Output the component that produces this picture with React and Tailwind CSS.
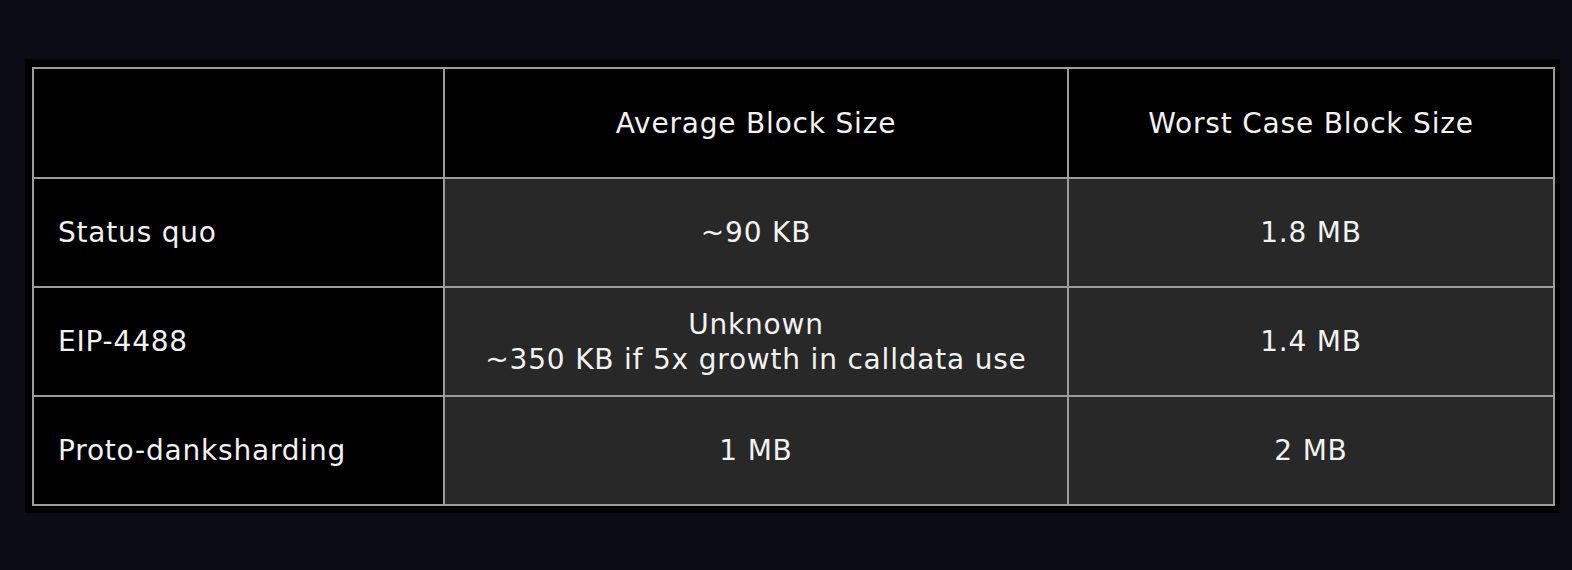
import React from "react";

const rows = [
  { label: "Status quo", avg: ["~90 KB"], worst: "1.8 MB" },
  { label: "EIP-4488", avg: ["Unknown", "~350 KB if 5x growth in calldata use"], worst: "1.4 MB" },
  { label: "Proto-danksharding", avg: ["1 MB"], worst: "2 MB" },
];

export default function App() {
  return (
    <div
      className="w-[1572px] h-[570px] bg-[#0b0c15] pt-[59px] pl-[25px]"
      style={{ fontFamily: '"DejaVu Sans", sans-serif' }}
    >
      <div className="w-[1535px] h-[454px] bg-black pl-[7px] pt-[8px]">
        <table className="border-collapse text-[#f2f2f2] text-[28px] leading-[35px] tracking-[0.8px]">
          <thead>
            <tr className="h-[110px]">
              <th className="w-[411px] border-2 border-[#9c9c9c] bg-black"></th>
              <th className="w-[624px] border-2 border-[#9c9c9c] bg-black font-normal text-center">
                Average Block Size
              </th>
              <th className="w-[486px] border-2 border-[#9c9c9c] bg-black font-normal text-center">
                Worst Case Block Size
              </th>
            </tr>
          </thead>
          <tbody>
            {rows.map((row) => (
              <tr key={row.label} className="h-[109px]">
                <td className="border-2 border-[#9c9c9c] bg-black pl-[24px] text-left">
                  {row.label}
                </td>
                <td className="border-2 border-[#9c9c9c] bg-[#282828] text-center">
                  {row.avg.map((line) => (
                    <div key={line}>{line}</div>
                  ))}
                </td>
                <td className="border-2 border-[#9c9c9c] bg-[#282828] text-center">
                  {row.worst}
                </td>
              </tr>
            ))}
          </tbody>
        </table>
      </div>
    </div>
  );
}
